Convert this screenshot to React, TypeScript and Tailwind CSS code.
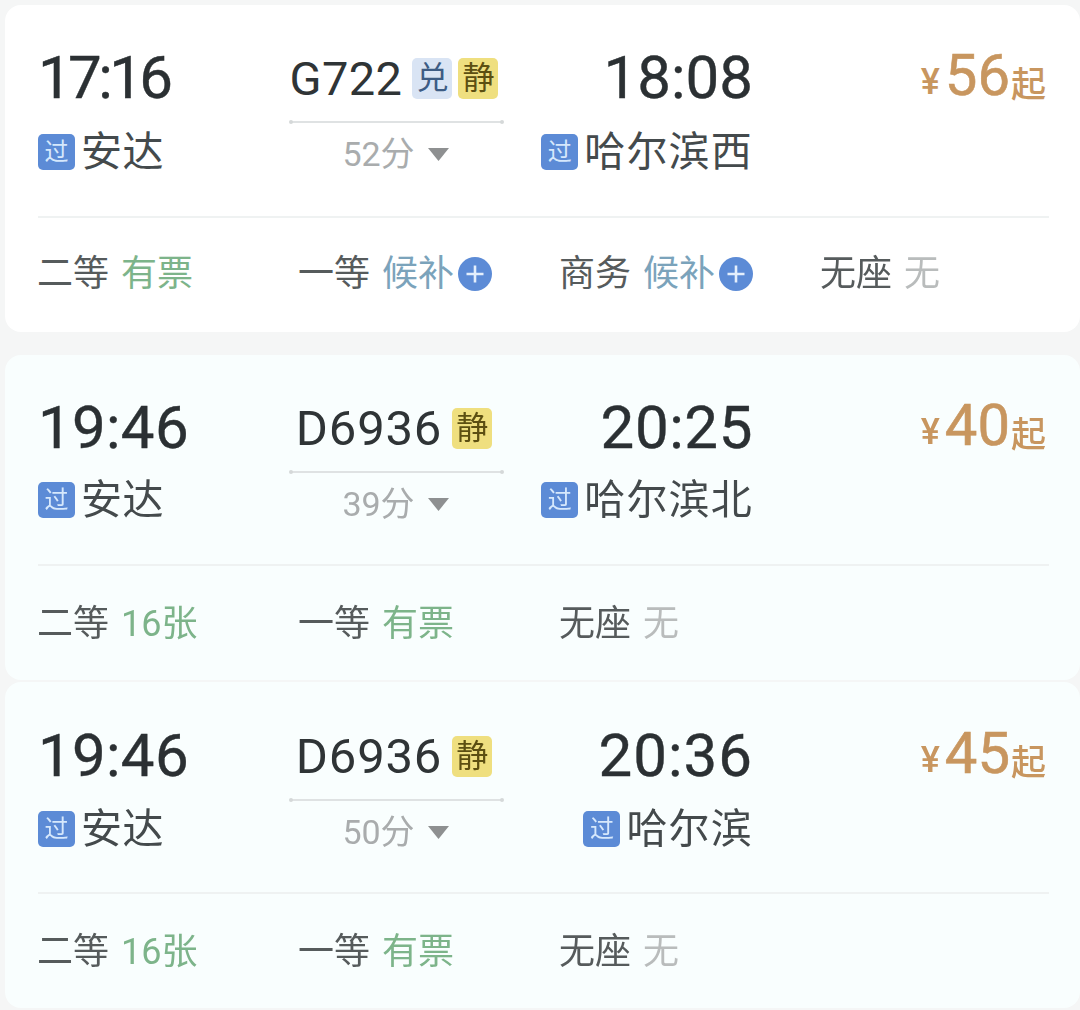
const FONT = "font-['Roboto','Noto_Sans_CJK_SC',sans-serif]";

type Seat = { label: string; value: string; tone: "green" | "blue" | "gray"; plus?: boolean };
type Trip = {
  card: string; timeGap: string; dividerGap: string; seatGap: string; pt: string;
  dep: string; depCls: string; arr: string; arrCls: string; arrStation: string; train: string; trainCls: string;
  dui?: boolean; mins: string; price: string; seats: Seat[];
};

const tone = { green: "text-[#7db48a]", blue: "text-[#7ba3bb]", gray: "text-[#b9bcbc]" };

const trips: Trip[] = [
  {
    card: "mt-[5px] h-[327px] bg-white", pt: "pt-[43px]", timeGap: "mt-[22px]", dividerGap: "mt-[40px]", seatGap: "mt-[36px]",
    dep: "17:16", depCls: "tracking-[-3.6px]", arr: "18:08", arrCls: "tracking-[0px]", arrStation: "哈尔滨西", train: "G722", trainCls: "text-[47px] tracking-[0.4px]", dui: true, mins: "52分", price: "56",
    seats: [
      { label: "二等", value: "有票", tone: "green" },
      { label: "一等", value: "候补", tone: "blue", plus: true },
      { label: "商务", value: "候补", tone: "blue", plus: true },
      { label: "无座", value: "无", tone: "gray" },
    ],
  },
  {
    card: "mt-[23px] h-[325px] bg-[#f9fefe]", pt: "pt-[43px]", timeGap: "mt-[20px]", dividerGap: "mt-[38px]", seatGap: "mt-[38px]",
    dep: "19:46", depCls: "tracking-[0.3px]", arr: "20:25", arrCls: "tracking-[0.6px]", arrStation: "哈尔滨北", train: "D6936", trainCls: "text-[49px] tracking-[0.8px]", mins: "39分", price: "40",
    seats: [
      { label: "二等", value: "16张", tone: "green" },
      { label: "一等", value: "有票", tone: "green" },
      { label: "无座", value: "无", tone: "gray" },
    ],
  },
  {
    card: "mt-[2px] h-[326px] bg-[#f9fefe]", pt: "pt-[44px]", timeGap: "mt-[21px]", dividerGap: "mt-[38px]", seatGap: "mt-[38px]",
    dep: "19:46", depCls: "tracking-[0.3px]", arr: "20:36", arrCls: "tracking-[1px]", arrStation: "哈尔滨", train: "D6936", trainCls: "text-[49px] tracking-[0.8px]", mins: "50分", price: "45",
    seats: [
      { label: "二等", value: "16张", tone: "green" },
      { label: "一等", value: "有票", tone: "green" },
      { label: "无座", value: "无", tone: "gray" },
    ],
  },
];

function PassBadge() {
  return (
    <span className="flex h-[36px] w-[37px] shrink-0 items-center justify-center rounded-[5px] bg-[#5c8bd6] text-[24px] leading-none text-[#d6e8fc]">
      过
    </span>
  );
}

function Station({ name, cls }: { name: string; cls: string }) {
  return (
    <div className="flex h-[44px] items-center gap-[6px]">
      <PassBadge />
      <span className={`whitespace-nowrap text-[41px] leading-none text-[#444a4c] ${cls}`}>{name}</span>
    </div>
  );
}

function Tag({ text, cls }: { text: string; cls: string }) {
  return (
    <span className={`flex h-[41px] w-[40px] shrink-0 items-center justify-center rounded-[5px] text-[32px] leading-none ${cls}`}>
      {text}
    </span>
  );
}

function SeatCell({ seat }: { seat: Seat }) {
  return (
    <div className="flex w-[261px] shrink-0 items-center gap-[12px] text-[36px] leading-none">
      <span className="text-[#565b5c]">{seat.label}</span>
      <span className="flex items-center gap-[4px]">
        <span className={tone[seat.tone]}>{seat.value}</span>
        {seat.plus && (
          <svg width="34" height="34" viewBox="0 0 34 34" className="shrink-0">
            <circle cx="17" cy="17" r="17" fill="#5c8bd6" />
            <path d="M8.5 17h17M17 8.5v17" stroke="#e4effc" strokeWidth="2.6" />
          </svg>
        )}
      </span>
    </div>
  );
}

function Card({ t }: { t: Trip }) {
  return (
    <section className={`ml-[5px] rounded-[16px] pl-[33px] pr-[31px] ${t.card} ${t.pt}`}>
      <div className="flex">
        <div className="w-[251px] shrink-0">
          <div className={`flex h-[60px] items-center text-[60px] leading-none text-[#2b3033] [-webkit-text-stroke:0.4px_#2b3033] ${t.depCls}`}>
            {t.dep}
          </div>
          <div className={t.timeGap}>
            <Station name="安达" cls="tracking-[0.6px]" />
          </div>
        </div>

        <div className="w-[216px] shrink-0">
          <div className="flex h-[60px] items-center justify-center gap-[6px] pr-[6px]">
            <span className={`mr-[4px] leading-none text-[#2f3436] ${t.trainCls}`}>{t.train}</span>
            {t.dui && <Tag text="兑" cls="bg-[#d9e4f4] text-[#3d5c84]" />}
            <Tag text="静" cls="bg-[#efdf7f] text-[#5c4f12]" />
          </div>
          <div className="relative ml-[1px] mr-[2px] mt-[13px] h-[2px] bg-[#dfe2e3]">
            <span className="absolute -left-[1px] -top-[1px] h-[4px] w-[4px] rounded-full bg-[#d5d8d9]" />
            <span className="absolute -right-[1px] -top-[1px] h-[4px] w-[4px] rounded-full bg-[#d5d8d9]" />
          </div>
          <div className="mt-[9px] flex h-[44px] items-center justify-center gap-[13px] pr-[3px]">
            <span className="text-[34px] leading-none text-[#a9acad]">{t.mins}</span>
            <svg width="21" height="13" viewBox="0 0 21 13">
              <path d="M0 0h21L10.5 13z" fill="#8e9091" />
            </svg>
          </div>
        </div>

        <div className="flex w-[248px] shrink-0 flex-col items-end">
          <div className={`flex h-[60px] items-center text-[60px] leading-none text-[#2b3033] [-webkit-text-stroke:0.4px_#2b3033] ${t.arrCls}`}>
            {t.arr}
          </div>
          <div className={t.timeGap}>
            <Station name={t.arrStation} cls="tracking-[1.2px]" />
          </div>
        </div>

        <div className="flex h-[56px] flex-1 items-end justify-end pr-[3px] text-[#c8965f]">
          <span className="mb-[4px] mr-[5px] text-[36px] font-medium leading-none">¥</span>
          <span className="text-[58px] leading-none [-webkit-text-stroke:0.6px_#c8965f]">{t.price}</span>
          <span className="ml-[1px] -mb-[1px] text-[35px] font-medium leading-[38px]">起</span>
        </div>
      </div>

      <div className={`h-[2px] bg-[#eff2f2] ${t.dividerGap}`} />

      <div className={`-ml-[1px] flex h-[40px] items-center ${t.seatGap}`}>
        {t.seats.map((s) => (
          <SeatCell key={s.label} seat={s} />
        ))}
      </div>
    </section>
  );
}

export default function App() {
  return (
    <div className={`h-[1010px] w-[1080px] overflow-hidden bg-[#f5f6f6] ${FONT}`}>
      <div className="h-[1010px] overflow-hidden blur-[0.4px]">
        {trips.map((t) => (
          <Card key={t.dep + t.arr} t={t} />
        ))}
      </div>
    </div>
  );
}
